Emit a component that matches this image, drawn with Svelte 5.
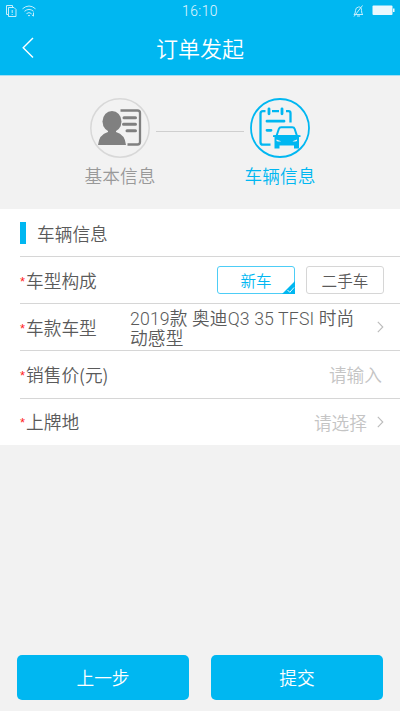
<script lang="ts">
	let carType = 'new';
	let price = '';

	const carTypes = [
		{ id: 'new', text: '新车' },
		{ id: 'used', text: '二手车' }
	];
	const model = '2019款 奥迪Q3 35 TFSI 时尚动感型';
</script>

<div class="page">
	<header>
		<div class="status">
			<svg class="sim" viewBox="0 0 11 12" width="11" height="12">
				<path d="M2.5 9.5h-2v-9h6v1.500M2.500 2.500h5.500l2 2v7h-7.500zM6.200 5v3M6.200 9v1" />
			</svg>
			<svg class="wifi" viewBox="0 0 14 12" width="14" height="12">
				<path d="M.5 3.800q6.500-5.600 13 0M2.500 6.300q4.500-3.800 9 0M4.500 8.600q2.500-2 5 0M6 10.600h2M11.500 7.500v3.500M9.800 9.800l1.700 1.400" />
			</svg>
			<span class="time">16:10</span>
			<svg class="bell" viewBox="0 0 11 12" width="11" height="12">
				<path d="M1 9.500q1.500-1 1.500-4t3-3.500 3 3.500 1.500 4zM4 11h3M9.500.5l-8.500 11" />
			</svg>
			<svg class="battery" viewBox="0 0 23 11" width="23" height="11">
				<rect x=".5" y=".5" width="20" height="9.500" rx="1" />
				<path d="M21 3.500h1.500v3.500h-1.500z" />
			</svg>
		</div>
		<div class="nav">
			<svg class="back" viewBox="0 0 12 22" width="12" height="22">
				<path d="M11 1L1.200 10.700l9.800 9.800" />
			</svg>
			<h1>订单发起</h1>
		</div>
	</header>

	<section class="steps">
		<div class="step">
			<svg viewBox="0 0 60 60" width="60" height="60">
				<circle class="ring" cx="30" cy="30" r="29.200" />
				<path class="line" d="M30.500 12.500h17q2.500 0 2.500 2.500v29q0 2.500-2.500 2.500h-10" />
				<path class="bars" d="M34 19.700h11.500M33.500 26.200h12M37 32.800h8.500" />
				<ellipse class="solid" cx="22" cy="23.500" rx="9.500" ry="10.500" />
				<path class="solid" d="M18 31h8v3q9 2.500 10 13H8q1-10.500 10-13z" />
			</svg>
			<span>基本信息</span>
		</div>
		<div class="link"></div>
		<div class="step active">
			<svg viewBox="0 0 60 60" width="60" height="60">
				<circle class="ring" cx="30" cy="30" r="29" />
				<path class="line" d="M15.500 13.200h-2.500q-2.500 0-2.500 2.500v28.500q0 2.500 2.500 2.500h7.500M22 13.200h7M36 13.200h2.500q2 0 2 2v9.300" />
				<path class="bars" d="M19 10.800v5M32 10.800v5M17 23.200h17M17 32.300h4" />
				<path class="roof" d="M26.500 38l2.300-7q.6-1.800 2.400-1.800h11.100q1.800 0 2.400 1.800l2.300 7" />
				<path class="solid" d="M23 37.300l2.500-.3h22.500l2.500.3v1.700h-1.500v11.500h-5v-3h-14.500v3h-5v-11.500h-1.500zM26.500 41.500v1.500q3 1 4.500.2zM47 41.500l-4.500 1.700q1.500.8 4.500-.2z" fill-rule="evenodd" />
			</svg>
			<span>车辆信息</span>
		</div>
	</section>

	<section class="form">
		<h2>车辆信息</h2>
		<div class="row">
			<span class="label"><i>*</i>车型构成</span>
			<div class="options">
				{#each carTypes as type}
					<button class="option" class:selected={carType === type.id} on:click={() => (carType = type.id)}>
						{type.text}
						{#if carType === type.id}
							<svg class="tick" viewBox="0 0 13 13" width="13" height="13">
								<path class="corner" d="M13 0v13H0z" />
								<path class="check" d="M5.500 9l2.300 2.300L12 6.500" />
							</svg>
						{/if}
					</button>
				{/each}
			</div>
		</div>
		<div class="row">
			<span class="label"><i>*</i>车款车型</span>
			<span class="value">{model}</span>
			<svg class="arrow" viewBox="0 0 7 12" width="7" height="12"><path d="M.8.8l5 5.200-5 5.200" /></svg>
		</div>
		<div class="row">
			<span class="label"><i>*</i>销售价(元)</span>
			<input type="text" placeholder="请输入" bind:value={price} />
		</div>
		<div class="row">
			<span class="label"><i>*</i>上牌地</span>
			<span class="hint">请选择</span>
			<svg class="arrow" viewBox="0 0 7 12" width="7" height="12"><path d="M.8.8l5 5.200-5 5.200" /></svg>
		</div>
	</section>

	<footer>
		<button>上一步</button>
		<button>提交</button>
	</footer>
</div>

<style>
	:global(body) {
		margin: 0;
		background: #f2f2f2;
	}
	.page {
		display: flex;
		flex-direction: column;
		height: 711px;
		box-sizing: border-box;
		font-family: 'Noto Sans CJK SC', sans-serif;
		font-weight: 350;
		font-size: 17.7px;
		color: #5a5a5a;
		background: #f2f2f2;
	}
	svg {
		display: block;
		flex: none;
		fill: none;
	}
	button,
	input {
		font: inherit;
		padding: 0;
	}
	header {
		height: 76px;
		border-bottom: 1px solid #a4def3;
		box-sizing: border-box;
		background: #00b7f1;
		color: #fff;
	}
	.status {
		display: flex;
		align-items: center;
		height: 21px;
		padding: 0 5px 0 6px;
	}
	.sim,
	.wifi,
	.bell {
		stroke: #c4eefc;
		stroke-width: 1;
	}
	.wifi {
		margin-left: 5px;
	}
	.time {
		flex: 1;
		text-align: center;
		padding-left: 11px;
		font-family: Roboto, sans-serif;
		font-size: 13.8px;
		font-weight: 300;
		letter-spacing: 0.5px;
		color: #e6f8fe;
	}
	.battery {
		margin-left: 8px;
		fill: #e9f8fe;
	}
	.nav {
		display: flex;
		align-items: center;
		height: 54px;
		padding: 0 22px;
	}
	.back {
		stroke: #fff;
		stroke-width: 1.4;
	}
	h1 {
		flex: 1;
		margin: 0 12px 0 0;
		text-align: center;
		font-size: 22px;
		font-weight: 350;
		line-height: 52px;
		padding-bottom: 2px;
	}
	.steps {
		display: flex;
		justify-content: center;
		height: 133px;
		padding-top: 22px;
		box-sizing: border-box;
	}
	.step {
		display: flex;
		flex-direction: column;
		align-items: center;
		width: 72px;
		color: #999;
	}
	.step span {
		line-height: 26px;
		margin-top: 4px;
		white-space: nowrap;
	}
	.ring {
		stroke: #d8d8d8;
		stroke-width: 1.5;
	}
	.line {
		stroke: #808080;
		stroke-width: 2.3;
	}
	.bars {
		stroke: #808080;
		stroke-width: 3;
		stroke-linecap: round;
	}
	.solid {
		fill: #808080;
	}
	.step.active {
		color: #00b7f1;
	}
	.active .ring,
	.active .line,
	.active .bars,
	.roof {
		stroke: #00b7f1;
	}
	.roof {
		stroke-width: 2;
		fill: #f2f2f2;
	}
	.active .ring {
		stroke-width: 1.8;
	}
	.active .solid {
		fill: #00b7f1;
	}
	.active .bars {
		stroke-width: 2.8;
	}
	.link {
		width: 88px;
		height: 1px;
		margin-top: 33px;
		background: #cfcfcf;
	}
	.form {
		height: 236px;
		padding-left: 20px;
		background: #fff;
	}
	h2 {
		display: flex;
		align-items: center;
		height: 47px;
		margin: 0;
		font-size: 17.7px;
		font-weight: 350;
		line-height: 26px;
	}
	h2::before {
		content: '';
		width: 6px;
		height: 22px;
		margin-right: 11px;
		background: #00b7f1;
	}
	.row {
		display: flex;
		align-items: center;
		height: 47.2px;
		padding-right: 16px;
		box-sizing: border-box;
		border-top: 1px solid #d6d6d6;
	}
	.label {
		width: 110px;
		line-height: 26px;
		padding-bottom: 1px;
		white-space: nowrap;
	}
	.label i {
		display: inline-block;
		width: 6px;
		font-family: 'Liberation Sans', sans-serif;
		font-style: normal;
		font-size: 13px;
		line-height: 1;
		color: #f22;
		vertical-align: 2px;
	}
	.options {
		display: flex;
		gap: 11px;
		margin-left: auto;
	}
	.option {
		position: relative;
		width: 78px;
		height: 28px;
		box-sizing: border-box;
		border: 1px solid #d6d6d6;
		border-radius: 3px;
		background: #fff;
		color: #5a5a5a;
		font-size: 15.6px;
		line-height: 26px;
	}
	.option.selected {
		border-color: #4dcdf6;
		color: #00b7f1;
	}
	.tick {
		position: absolute;
		right: -1px;
		bottom: -1px;
	}
	.corner {
		fill: #00b7f1;
	}
	.check {
		stroke: #fff;
		stroke-width: 0.9;
	}
	.value {
		width: 232px;
		padding-top: 3px;
		font-family: Roboto, 'Noto Sans CJK SC', sans-serif;
		line-height: 20px;
		letter-spacing: 0.13px;
	}
	.arrow {
		margin-left: auto;
		stroke: #bbb;
		stroke-width: 1.1;
	}
	input {
		flex: 1;
		min-width: 0;
		border: none;
		outline: none;
		background: none;
		text-align: right;
		margin-right: 2px;
	}
	input::placeholder,
	.hint {
		color: #c4c4c4;
	}
	.hint {
		margin-left: auto;
	}
	.hint + .arrow {
		margin-left: 10px;
	}
	footer {
		display: flex;
		gap: 22px;
		margin-top: auto;
		padding: 0 17px 11px;
	}
	footer button {
		flex: 1;
		height: 45px;
		border: none;
		border-radius: 5px;
		background: #00b7f1;
		color: #fff;
		line-height: 45px;
	}
</style>
